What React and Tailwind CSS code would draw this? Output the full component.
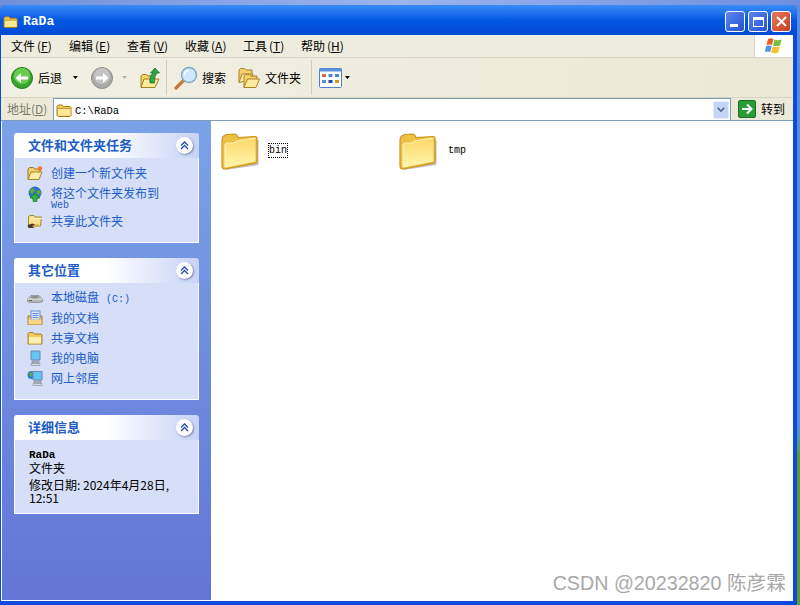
import React from 'react';

const CJK = '"Noto Sans CJK SC", sans-serif';
const MONO = '"Liberation Mono", "Noto Sans CJK SC", monospace';

const menus = [
  ['文件', 'F'],
  ['编辑', 'E'],
  ['查看', 'V'],
  ['收藏', 'A'],
  ['工具', 'T'],
  ['帮助', 'H'],
];

const FolderSmall = ({ className = 'w-4 h-4' }) => (
  <svg viewBox="0 0 16 16" className={className}>
    <path d="M1 13.5V4.5L2.2 3h4L7.6 4.5H14l1 1v8l-1 1H2z" fill="#f3c95a" stroke="#a87d18" />
    <path d="M2 7h12.5v6.5H2z" fill="#fde893" />
    <path d="M1.5 6.5h13" stroke="#c79a2b" fill="none" />
  </svg>
);

const FolderBig = () => (
  <svg viewBox="0 0 38 38" className="w-[38px] h-[38px] shrink-0">
    <defs>
      <linearGradient id="fb" x1="0" y1="0" x2="0" y2="1">
        <stop offset="0" stopColor="#fdd768" />
        <stop offset="1" stopColor="#fff6b0" />
      </linearGradient>
    </defs>
    <path d="M3 36 L36 31 L36 6 L3 11z" fill="#777" opacity="0.45" transform="translate(1.5 1)" />
    <path d="M1 33 V8 Q1 2 6 1.5 L13 1 Q16 1 17 4.5 L34 3.5 Q36 3.5 36 5.5 V28 Q36 30 34 30.2 L4 36 Q1 36 1 33z" fill="#eebf45" stroke="#cc9418" strokeWidth="1.2" />
    <path d="M4 34 V13 Q4 10 7 10 L12 10 Q14 10 15.5 8 L34.5 5 V28.5 L5 34.5z" fill="url(#fb)" />
    <path d="M4 34 V13 Q4 10 7 10 L12 10 Q14 10 15.5 8 L34.5 5" fill="none" stroke="#fff3b5" strokeWidth="1.2" />
  </svg>
);

const OpenFolder = ({ className = 'w-4 h-4', star }) => (
  <svg viewBox="0 0 16 16" className={className}>
    <path d="M1 14V4l1.5-1.5h4L8 4h5v3" fill="#f4cf6c" stroke="#9d7a27" />
    <path d="M1 14.5L4 7h11l-3 7.5z" fill="#fdeeaa" stroke="#a98327" />
    {star && <circle cx="13" cy="3.5" r="2.2" fill="#f0782a" />}
  </svg>
);

// two overlapping open folders on the toolbar button
const TwoFolders = () => (
  <svg viewBox="0 0 22 22" className="ml-[12px] w-[22px] h-[22px]">
    <path d="M1 15V3l1.5-1.5h4L8 3h6v5H6l-3 7z" fill="#f4cf6c" stroke="#a98327" />
    <path d="M1 15.5L4 7h11l-2 6z" fill="#fdeeaa" stroke="#a98327" />
    <path d="M6 20.5V9l1.5-1.5h4L13 9h6v3" fill="#f4cf6c" stroke="#a98327" />
    <path d="M6 20.5L9.5 12H21.5l-3.5 8.5z" fill="#fdeb9f" stroke="#a98327" />
  </svg>
);

const ShareFolder = () => (
  <svg viewBox="0 0 16 16" className="w-4 h-4">
    <path d="M1.5 13V3.5L3 2.5h4L8 4h6.5l-1 9z" fill="#f7e08e" stroke="#a4892f" />
    <path d="M4 6l11-.5" stroke="#fff8d2" fill="none" />
    <path d="M0.5 12l5-1.5 3 1.5-2 3H1.5z" fill="#4a3a2a" />
    <path d="M5 13l6-2 1 1.5-5 2z" fill="#e8a64a" />
  </svg>
);

const GlobeUp = () => (
  <svg viewBox="0 0 16 16" className="w-4 h-4">
    <circle cx="8" cy="7" r="6.5" fill="#2f6fc4" />
    <path d="M3 3.5 L7 2 L8 5 L5 8 L3 7z M9 5 L13 4 L14 8 L10 9z" fill="#5aa83e" />
    <path d="M8 7.5l5 4.5h-3v3.5H6V12H3z" fill="#2fb83e" stroke="#14701f" strokeWidth="0.6" />
  </svg>
);

const DriveIcon = () => (
  <svg viewBox="0 0 16 16" className="w-4 h-4">
    <path d="M0.5 9L4 5.5h8l3.5 3.5v2.5l-2 1h-11l-2-1z" fill="#b5b5b5" stroke="#7c7c7c" strokeWidth="0.6" />
    <path d="M0.5 9h15" stroke="#e8e8e8" fill="none" />
    <ellipse cx="8" cy="7.2" rx="4" ry="1.2" fill="#8f8f8f" />
    <rect x="2" y="10" width="3" height="1" fill="#555" />
  </svg>
);

const DocsIcon = () => (
  <svg viewBox="0 0 16 16" className="w-4 h-4">
    <path d="M1 6h14v8.5H1z" fill="#eec662" stroke="#a57c20" />
    <rect x="4" y="1" width="9" height="9" fill="#dfe9fb" stroke="#6b8fd0" />
    <path d="M5.5 3.5h6M5.5 5.5h6M5.5 7.5h6" stroke="#5d87d0" fill="none" />
    <path d="M1.5 9.5h13v5h-13z" fill="#f4d888" />
  </svg>
);

const SharedDocs = () => (
  <svg viewBox="0 0 16 16" className="w-4 h-4">
    <path d="M1 14V3.5l1-1h4L7.5 4H14l1 1v9z" fill="#f3cb5c" stroke="#a67f1f" />
    <path d="M2 7h12v6.5H2z" fill="#fdf0b5" />
  </svg>
);

const PcIcon = ({ globe }) => (
  <svg viewBox="0 0 16 16" className="w-4 h-4">
    {globe && <circle cx="4.5" cy="5" r="4" fill="#2f7fc8" />}
    {globe && <path d="M2 3l3-1 1 3-3 2z" fill="#5aa83e" />}
    <path d={globe ? 'M6 1.5h9v8.5H6z' : 'M4 1h9v9H4z'} fill="#66c4f4" stroke="#6d87a8" />
    <path d={globe ? 'M7 11h7v2H7z' : 'M5 11h7v2H5z'} fill="#b2bbc9" stroke="#6a7488" strokeWidth="0.5" />
    <path d={globe ? 'M6 13.5h9v2H6z' : 'M4 13.5h9v2H4z'} fill="#d5dae2" stroke="#777f8d" strokeWidth="0.5" />
  </svg>
);

const Chevron = () => (
  <div className="w-[17px] h-[17px] rounded-full bg-white shadow-[1px_1px_2px_rgba(60,70,120,0.55)] flex items-center justify-center">
    <svg viewBox="0 0 9 9" className="w-[9px] h-[9px]" fill="none" stroke="#1f4bb0" strokeWidth="1.3">
      <path d="M1 4.5l3.5-3.5 3.5 3.5M1 8l3.5-3.5L8 8" />
    </svg>
  </div>
);

const Panel = ({ title, className = '', children }) => (
  <div className={`mx-3 ${className}`}>
    <div className="h-[25px] rounded-t-[3px] bg-gradient-to-r from-white via-white to-[#c6d3f7] flex items-center pl-[14px] pr-[6px] justify-between">
      <span className="text-[13px] font-bold text-[#215dc6] pb-[2px]">{title}</span>
      <Chevron />
    </div>
    <div className="bg-[#d6dff7] border border-t-0 border-white">{children}</div>
  </div>
);

const LinkRow = ({ icon, children }) => (
  <div className="flex items-center h-5">
    <div className="w-4 h-4 mr-[8px] shrink-0">{icon}</div>
    <span className="text-[12px] text-[#215dc6] leading-none whitespace-nowrap">{children}</span>
  </div>
);

const GreenArrow = ({ disabled }) => (
  <svg viewBox="0 0 22 22" className="w-[22px] h-[22px]">
    <circle cx="11" cy="11" r="10.5" fill={disabled ? '#a9a9a9' : '#3aa52e'} stroke={disabled ? '#8d8d8d' : '#1e7f1c'} />
    <circle cx="11" cy="9" r="8" fill={disabled ? '#c4c4c4' : '#6bcc52'} />
    <path d="M17 9.5H10V6L4.5 11 10 16v-3.5h7z" fill="#fff" transform={disabled ? 'rotate(180 11 11)' : undefined} />
  </svg>
);

const Caret = ({ color = '#000' }) => (
  <svg viewBox="0 0 5 3" className="w-[5px] h-[3px]">
    <path d="M0 0h5L2.5 3z" fill={color} />
  </svg>
);

const ToolbarSep = ({ className }) => <div className={`w-[2px] h-[35px] border-l border-[#cfccbb] border-r-white ${className}`} />;

const App = () => (
  <div
    className="w-[800px] h-[605px] overflow-hidden flex flex-col bg-[#5f86dc] text-[12px] text-black"
    style={{ fontFamily: CJK }}
  >
    <div className="h-[5px] shrink-0 bg-gradient-to-r from-[#6d8fdc] via-[#9db4ea] to-[#6b8fe2]" />
    <div className="flex h-[600px]">
      <div className="w-[797px] flex flex-col rounded-t-[7px] overflow-hidden bg-[#0a4adc]">
        {/* title bar */}
        <div className="h-[30px] shrink-0 bg-gradient-to-b from-[#3a8cf8] via-[#0258e4] to-[#0349d4] flex items-center pl-[3px] pr-[6px] pt-[3px]">
          <FolderSmall className="w-[15px] h-[15px]" />
          <span className="ml-[5px] text-[13px] font-bold text-white" style={{ fontFamily: MONO }}>RaDa</span>
          <div className="ml-auto flex gap-[3px]">
            <div className="w-[20px] h-[21px] rounded-[3px] border border-white bg-gradient-to-br from-[#5a86ee] to-[#2752cf] flex items-end pl-[4px] pb-[4px]">
              <div className="w-[8px] h-[3px] bg-white" />
            </div>
            <div className="w-[20px] h-[21px] rounded-[3px] border border-white bg-gradient-to-br from-[#5a86ee] to-[#2752cf] flex items-center justify-center">
              <div className="w-[11px] h-[10px] border border-t-[3px] border-white" />
            </div>
            <div className="w-[20px] h-[21px] rounded-[3px] border border-white bg-gradient-to-br from-[#e8795c] to-[#c73a1c] flex items-center justify-center">
              <svg viewBox="0 0 11 11" className="w-[11px] h-[11px]" stroke="#fff" strokeWidth="2" fill="none">
                <path d="M1 1l9 9M10 1l-9 9" />
              </svg>
            </div>
          </div>
        </div>
        <div className="flex-1 min-h-0 flex flex-col ml-px mr-[4px] mb-[4px] bg-white">
          {/* menu bar */}
          <div className="h-[23px] shrink-0 bg-[#eeecdf] border-b border-[#d8d4c2] flex items-center">
            <div className="flex pl-[10px]">
              {menus.map(([label, key]) => (
                <span key={key} className="w-[58px] text-[12px] leading-none whitespace-nowrap">
                  {label}<span className="ml-[2px]">(<span className="underline">{key}</span>)</span>
                </span>
              ))}
            </div>
            <div className="ml-auto w-[39px] h-full bg-white border-l border-[#d8d4c2] flex items-center justify-center">
              <svg viewBox="0 0 20 18" className="w-[20px] h-[18px]">
                <path d="M4 2Q7 0.5 9.5 2L8 8Q5.5 6.8 2.5 8z" fill="#e8602c" />
                <path d="M10.5 2.5Q13.5 4 17.5 2.5L16 8.5Q12.5 10 9 8.5z" fill="#7cc042" />
                <path d="M2.2 9Q5 7.8 7.7 9L6.2 15Q3.5 13.8 0.8 15z" fill="#4f93dc" />
                <path d="M8.7 9.5Q12 11 15.7 9.5L14.2 15.5Q11 17 7.2 15.5z" fill="#f6be2e" />
              </svg>
            </div>
          </div>
          {/* toolbar */}
          <div className="h-[40px] shrink-0 bg-gradient-to-r from-[#f2f0e4] to-[#ebe8d6] border-b border-[#d8d4c2] flex items-center pl-[10px]">
            <GreenArrow />
            <span className="ml-[5px] leading-none">后退</span>
            <span className="ml-[11px]"><Caret /></span>
            <span className="ml-[13px]"><GreenArrow disabled /></span>
            <span className="ml-[9px]"><Caret color="#b5b5a8" /></span>
            <svg viewBox="0 0 20 22" className="ml-[13px] w-[20px] h-[22px]">
              <path d="M1 20V9l1.5-1.5h4L8 9h4v11z" fill="#f7d866" stroke="#a37e22" />
              <path d="M1 20.5L4 12h15l-4 8.5z" fill="#fdeb9f" stroke="#a37e22" />
              <path d="M10 16Q9 9 13 6H10.5L15 1l4.5 5H17q-3 3-2.5 10z" fill="#2fa544" stroke="#126c25" strokeWidth="0.7" />
            </svg>
            <ToolbarSep className="ml-[6px]" />
            <svg viewBox="0 0 24 24" className="ml-[6px] w-[24px] h-[24px]">
              <path d="M9.5 14.5L2 22" stroke="#c57a3a" strokeWidth="3.2" strokeLinecap="round" />
              <circle cx="15" cy="9" r="7.5" fill="#cfe9fa" stroke="#7fa6c8" strokeWidth="1.4" />
              <path d="M10.5 9a4.5 4.5 0 0 1 4.5-4.5" stroke="#fff" strokeWidth="1.5" fill="none" />
            </svg>
            <span className="ml-[4px] leading-none">搜索</span>
            <TwoFolders />
            <span className="ml-[5px] leading-none">文件夹</span>
            <ToolbarSep className="ml-[10px]" />
            <svg viewBox="0 0 23 20" className="ml-[6px] w-[23px] h-[20px]">
              <rect x="0.5" y="0.5" width="22" height="19" rx="1" fill="#fff" stroke="#4f7fc9" />
              <rect x="0.5" y="0.5" width="22" height="3" fill="#5b8fda" />
              <path d="M3 6h4v3H3z" fill="#d9694a" />
              <path d="M9.5 6h4v3h-4z" fill="#4b82d8" />
              <path d="M16 6h4v3h-4z" fill="#4b82d8" />
              <path d="M3 12h4v3H3z" fill="#5b8fda" />
              <path d="M9.5 12h4v3h-4z" fill="#1d4aa8" />
              <path d="M16 12h4v3h-4z" fill="#c99c1e" />
            </svg>
            <span className="ml-[3px]"><Caret /></span>
          </div>
          {/* address bar */}
          <div className="h-[23px] shrink-0 bg-[#ece9d8] flex items-center border-b border-[#7f9db9]">
            <span className="w-[52px] pl-[6px] text-[#7a7a6c] leading-none whitespace-nowrap">地址(<span className="underline">D</span>)</span>
            <div className="w-[678px] h-full bg-white border-t border-x border-[#7f9db9] flex items-center pl-[2px] pr-px">
              <FolderSmall />
              <span className="ml-[3px] mt-[3px] text-[10.5px] leading-none" style={{ fontFamily: MONO }}>C:\RaDa</span>
              <div className="ml-auto w-[16px] h-[18px] rounded-[2px] bg-[#c4d3f6] border border-[#e4ebfb] flex items-center justify-center">
                <svg viewBox="0 0 8 6" className="w-[8px] h-[6px]" fill="none" stroke="#4d6185" strokeWidth="1.6">
                  <path d="M0.8 0.8L4 4.2 7.2 0.8" />
                </svg>
              </div>
            </div>
            <div className="flex items-center pl-[7px] h-full">
              <div className="w-[18px] h-[18px] rounded-[2px] bg-[#2a9c35] border border-[#18702a] flex items-center justify-center">
                <svg viewBox="0 0 12 12" className="w-[12px] h-[12px]" fill="none" stroke="#fff" strokeWidth="2">
                  <path d="M1 6h9M6 1.5L10.5 6 6 10.5" />
                </svg>
              </div>
              <span className="ml-[5px] leading-none whitespace-nowrap">转到</span>
            </div>
          </div>
          {/* body */}
          <div className="flex-1 min-h-0 flex pl-px pb-px">
            <div className="w-[209px] shrink-0 bg-gradient-to-b from-[#7ba2e7] to-[#6375d6] pt-[12px]">
              <Panel title="文件和文件夹任务">
                <div className="pl-[12px] pt-[5px] pb-[11px]">
                  <LinkRow icon={<OpenFolder star />}>创建一个新文件夹</LinkRow>
                  <div className="flex h-[28px] pt-[2px]">
                    <div className="w-4 h-4 mr-[8px] mt-px shrink-0"><GlobeUp /></div>
                    <div className="flex flex-col">
                      <span className="text-[12px] text-[#215dc6] leading-[15px] whitespace-nowrap">将这个文件夹发布到</span>
                      <span className="text-[10px] text-[#215dc6] leading-[10px] mt-px" style={{ fontFamily: MONO }}>Web</span>
                    </div>
                  </div>
                  <LinkRow icon={<ShareFolder />}>共享此文件夹</LinkRow>
                </div>
              </Panel>
              <Panel title="其它位置" className="mt-[15px]">
                <div className="pl-[12px] pt-[5px] pb-[11px]">
                  <LinkRow icon={<DriveIcon />}>
                    本地磁盘<span className="ml-[7px] text-[10px]" style={{ fontFamily: MONO }}>(C:)</span>
                  </LinkRow>
                  <LinkRow icon={<DocsIcon />}>我的文档</LinkRow>
                  <LinkRow icon={<SharedDocs />}>共享文档</LinkRow>
                  <LinkRow icon={<PcIcon />}>我的电脑</LinkRow>
                  <LinkRow icon={<PcIcon globe />}>网上邻居</LinkRow>
                </div>
              </Panel>
              <Panel title="详细信息" className="mt-[15px]">
                <div className="pl-[14px] pt-[10px] pb-[9px] pr-1">
                  <div className="font-bold text-[11px] leading-[11px]" style={{ fontFamily: MONO }}>RaDa</div>
                  <div className="text-[12px] leading-[13px]">文件夹</div>
                  <div className="mt-[4px] text-[12px] leading-[13px]">修改日期: 2024年4月28日,<br />12:51</div>
                </div>
              </Panel>
            </div>
            <div className="flex-1 min-w-0 relative bg-white pl-[10px] pt-[12px] flex items-start">
              <div className="w-[178px] flex items-start">
                <FolderBig />
                <span className="ml-[9px] mt-[10px] border border-dotted border-black text-[10px] leading-[13px]" style={{ fontFamily: MONO }}>bin</span>
              </div>
              <div className="flex items-start">
                <FolderBig />
                <span className="ml-[11px] mt-[11px] text-[10px] leading-[13px]" style={{ fontFamily: MONO }}>tmp</span>
              </div>
              <span className="absolute right-[7px] bottom-[5px] text-[19.7px] leading-[24px] text-[#a8a8a8] whitespace-nowrap" style={{ fontFamily: '"Liberation Sans", "Noto Sans CJK SC", sans-serif' }}>
                CSDN @20232820 陈彦霖
              </span>
            </div>
          </div>
        </div>
      </div>
      <div className="w-[3px] bg-gradient-to-b from-[#5a8ce4] via-[#5a8ce4] via-70% to-[#5d9a30] to-75%" />
    </div>
  </div>
);

export default App;
